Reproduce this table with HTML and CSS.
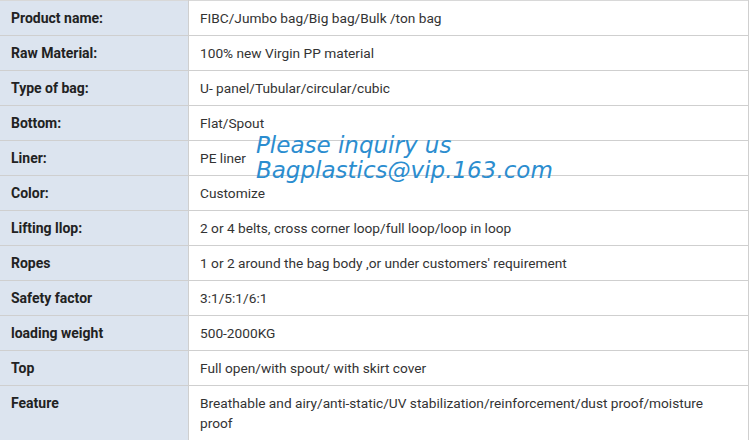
FILE: index.html
```html
<!DOCTYPE html>
<html>
<head>
<meta charset="utf-8">
<link rel="stylesheet" href="styles.css">
</head>
<body>
<div class="wrap">
<table class="spec">
<tr><th>Product name:</th><td>FIBC/Jumbo bag/Big bag/Bulk /ton bag</td></tr>
<tr><th>Raw Material:</th><td>100% new Virgin PP material</td></tr>
<tr><th>Type of bag:</th><td>U- panel/Tubular/circular/cubic</td></tr>
<tr><th>Bottom:</th><td>Flat/Spout</td></tr>
<tr><th>Liner:</th><td>PE liner</td></tr>
<tr><th>Color:</th><td>Customize</td></tr>
<tr><th>Lifting llop:</th><td>2 or 4 belts, cross corner loop/full loop/loop in loop</td></tr>
<tr><th>Ropes</th><td>1 or 2 around the bag body ,or under customers' requirement</td></tr>
<tr><th>Safety factor</th><td>3:1/5:1/6:1</td></tr>
<tr><th>loading weight</th><td>500-2000KG</td></tr>
<tr><th>Top</th><td>Full open/with spout/ with skirt cover</td></tr>
<tr><th>Feature</th><td>Breathable and airy/anti-static/UV stabilization/reinforcement/dust proof/moisture proof</td></tr>
</table>
<div class="mark">Please inquiry us<br>Bagplastics@vip.163.com</div>
</div>
</body>
</html>
```
FILE: styles.css
```css
html, body { margin: 0; padding: 0; background: #fff; }
.wrap { position: relative; width: 750px; height: 440px; overflow: hidden; }
.spec {
  border-collapse: collapse;
  width: 749px;
  font-family: Roboto, "Liberation Sans", sans-serif;
  font-size: 14px;
  line-height: 20px;
}
.spec th, .spec td {
  border: 1px solid #cfcfcf;
  padding: 7px 11px 7px 11px;
  text-align: left;
  vertical-align: top;
}
.spec th {
  width: 166px;
  background: #dce4ef;
  color: #222;
  font-weight: bold;
  border-left: none;
}
.spec td { color: #333; font-size: 13.7px; }
.spec tr:first-child th, .spec tr:first-child td { border-top: 1px solid #d8d8d8; }
.mark {
  position: absolute;
  left: 256px;
  top: 133px;
  font-family: "DejaVu Sans", sans-serif;
  font-style: oblique;
  font-size: 23px;
  line-height: 25px;
  letter-spacing: 0;
  color: #2b8dcf;
}
```
